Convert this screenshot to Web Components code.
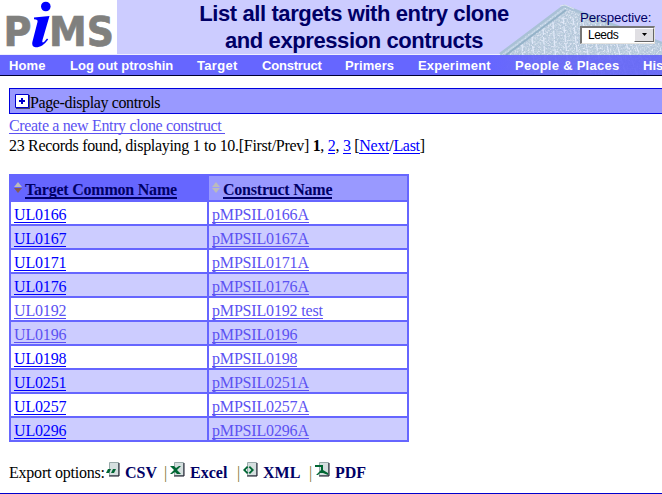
<!DOCTYPE html>
<html lang="en"><head><meta charset="utf-8"><title>PiMS</title>
<style>html,body{margin:0;height:494px;overflow:hidden;background:#fff}body{font:16px/20px "Liberation Serif",serif;color:#000}</style></head>
<body><pims-page></pims-page>
<script>
const define=(name,html)=>customElements.define(name,class extends HTMLElement{
  constructor(){super();this.attachShadow({mode:'open'}).innerHTML=typeof html==='function'?html(this):html;}
});
define('pims-logo',`<style>:host{display:block;width:117px;height:54px;background:#fff}svg{display:block;overflow:visible}text{font-family:"DejaVu Sans","Open Sans",sans-serif;font-weight:bold;fill:#80807e;stroke:#80807e;stroke-width:.7}</style>
<svg width="117" height="54"><text x="3.5" y="46" font-size="40" textLength="28" lengthAdjust="spacingAndGlyphs">P</text><text x="49" y="46" font-size="40" textLength="65" lengthAdjust="spacingAndGlyphs">MS</text>
<g fill="#00f"><circle cx="45.8" cy="6.500" r="4.800"/><path d="M34 17.500 49.500 16 42.500 40q-1 4 2 1.500l2.500-3 1.200 1C44 45 40 47.500 35.500 47.300q-4-.5-3.200-5L37.500 22q.8-2.700-3.500-2.800z"/></g></svg>`);
define('roof-picture',`<style>:host{display:block;width:180px;height:75px}svg{display:block}</style>
<svg width="180" height="75"><defs>
<filter id="n" x="0" y="0" width="100%" height="100%"><feTurbulence type="fractalNoise" baseFrequency=".6" numOctaves="2" seed="8"/><feColorMatrix values="0 0 0 0 .52  0 0 0 0 .65  0 0 0 0 .74  3 0 0 0 -1.35"/><feComposite in2="SourceGraphic" operator="in"/></filter>
<filter id="w" x="0" y="0" width="100%" height="100%"><feTurbulence type="fractalNoise" baseFrequency=".6" numOctaves="2" seed="21"/><feColorMatrix values="0 0 0 0 .8  0 0 0 0 .84  0 0 0 0 .94  0 3 0 0 -1.3"/><feComposite in2="SourceGraphic" operator="in"/></filter>
<clipPath id="c"><path d="M18 55 82 5 180 43V75H0z"/></clipPath></defs>
<g clip-path="url(#c)"><path fill="#b4c6da" d="M0 0h180v75H0z"/>
<path filter="url(#w)" d="M0 0h180v75H0z"/><path filter="url(#n)" d="M0 0h180v75H0z"/>
<g stroke="#e2eafa" stroke-width="1.200" stroke-dasharray="7 2"><path d="M61 28l3 47M71 22l4 53M81 17l6 58M91 18l7 57M101 22l8 53M111 26l9 49M121 28l11 47M131 31l13 44M141 34l14 41M151 38l15 37M50 37l3 38M40 44l2 31"/></g></g>
<path d="M18 54 82 6 180 43" fill="none" stroke="#a9c1d6" stroke-width="2.500"/><path d="M24 55 84 10" fill="none" stroke="#94b2c8" stroke-width="2"/><path d="M22 54 83 8" fill="none" stroke="#c3d6e8"/><path d="M78 6l5-1 9 4" fill="none" stroke="#dce6ee"/></svg>`);
define('perspective-select',`<style>:host{display:block;width:80px;font:13.300px/16px "Liberation Sans",sans-serif;letter-spacing:-.15px;color:#006}
.box{box-sizing:border-box;display:flex;width:75px;height:18px;background:#fff;border:1px solid #e4e2de;border-top:2px solid #777;border-left:2px solid #777;color:#000;font-size:12px;line-height:15px}
.v{flex:1;padding:0 0 0 6px;letter-spacing:-.5px}.b{box-sizing:border-box;width:20px;height:14px;background:#e0dfe3;border:1px solid #fff;border-right-color:#666;border-bottom-color:#666;display:grid;place-items:center}</style>
<div><slot></slot></div><div class="box"><span class="v">Leeds</span><span class="b"><svg width="7" height="4"><path d="M1 0h5L3.500 3z"/></svg></span></div>`);
define('pims-header',`<style>:host{display:flex;position:relative;height:54px;background:#ccf;border-bottom:1px solid #eef}
h1{box-sizing:border-box;margin:0;width:474px;text-align:center;font:bold 22px/27px "Liberation Sans",sans-serif;letter-spacing:-.4px;color:#006}
pims-logo,h1,perspective-select{position:relative;z-index:1;flex:none}roof-picture{position:absolute;left:482px;top:0}h1 span{display:block;white-space:nowrap}perspective-select{margin:10px 0 0 -11px}</style>
<pims-logo></pims-logo><roof-picture></roof-picture><h1><span>List all targets with entry clone</span><span>and expression contructs</span></h1><perspective-select>Perspective:</perspective-select>`);
define('pims-nav',`<style>:host{position:relative;z-index:2;display:grid;grid-template-columns:61px 127px 65px 83px 73px 97px 128px 80px;height:20px;padding-left:9px;border-bottom:1px solid #003;background:linear-gradient(90deg,#66f 490px,#6060f8e0 540px,#6060f8e0);font:bold 13px/21px "Liberation Sans",sans-serif;color:#fff;overflow:hidden}span{white-space:nowrap}</style>`+[['Home',.1],['Log out ptroshin',0],['Target',.3],['Construct',-.2],['Primers',.1],['Experiment',.2],['People &amp; Places',.27],['History',0]].map(([t,s])=>`<span style="letter-spacing:${s}px">${t}</span>`).join(''));
define('display-controls',`<style>:host{box-sizing:border-box;display:flex;align-items:center;height:26px;border:1px solid #00d;border-right:0;background:#99f;padding-left:5px;letter-spacing:-.38px}svg{flex:none}span{padding-top:3px}</style>
<svg width="15" height="15"><path fill="#446" d="M1 1h14v14H1z"/><path fill="#fff" stroke="#00c" d="M.5.5h13v13H.5z"/><path fill="#00c" d="M4 6h6v2H4zM6 4h2v6H6z"/></svg><span><slot></slot></span>`);
define('text-link',`<style>:host{color:#00f;border-bottom:1px solid currentColor;display:inline-block;height:15px;line-height:16px;white-space:pre}:host([visited]){color:#5c52f2}:host([head]){color:#006;font-weight:bold;border-bottom-width:2px;letter-spacing:-.22px}</style><slot></slot>`);
define('sort-icon',`<style>:host{display:block;width:8px;height:11px;margin-right:3px}svg{display:block}</style><svg width="8" height="11"><path fill="#bbb" d="M4 0l4 5H0z"/><path fill="var(--down,#bbb)" d="M0 6h8l-4 5z"/></svg>`);
define('target-table',()=>{
 const r=[['0166','0166A'],['0167','0167A'],['0171','0171A'],['0176','0176A'],['0192','0192 test',1],['0196','0196',1],['0198','0198'],['0251','0251A'],['0257','0257A'],['0296','0296A']];
 return `<style>:host{box-sizing:border-box;display:grid;grid-template-columns:196px 198px;gap:2px;width:400px;height:268px;padding:2px;background:#66f;grid-template-rows:24px repeat(10,22px);letter-spacing:-.17px}
.h,.c{display:flex;align-items:center;min-width:0}.h{padding:5px 0 0 3px;box-sizing:border-box}.h sort-icon{margin-top:-6px}.h2{background:#99f}.c{background:#fff;padding:4px 0 0 3px;box-sizing:border-box}.e{background:#ccf}</style>
<div class="h"><sort-icon style="--down:#875b54"></sort-icon><text-link head>Target Common Name</text-link></div><div class="h h2"><sort-icon></sort-icon><text-link head>Construct Name</text-link></div>`+
 r.map((x,i)=>{const k='c'+(i%2?' e':'');return `<div class="${k}"><text-link ${x[2]?'visited':''}>UL${x[0]}</text-link></div><div class="${k}"><text-link visited>pMPSIL${x[1]}</text-link></div>`}).join('');});
const glyphs={csv:'M1 9l2-4h3L4 9zM6 9l2-4h3L9 9z',excel:'M0 2h4l2 2 3-2h2L7 6l4 4H7L5 8l-3 2H0l4-4z',xml:'M4 2L0 6l4 4 1.300-1.300L2.600 6l2.700-2.700zM7 2l4 4-4 4-1.300-1.300L8.400 6 5.700 3.300z',pdf:'M0 1h8v5l5 3v2L8 9H5l-2 2H1l5-5V3H0z'};
define('export-option',e=>`<style>:host{display:flex;font-weight:bold;color:#006}svg{margin:-1px 5px 0 -1px}</style><svg width="15" height="16"><path fill="#d5dfdf" stroke="#9aa" d="M4.500.5h9v13h-9z"/><path fill="none" stroke="#112" d="M4 14h10V1"/><path transform="translate(0 2)" fill="#063" d="${glyphs[e.getAttribute('kind')]}"/></svg><span><slot></slot></span>`);
define('export-bar',`<style>:host{display:grid;grid-template-columns:97px 65px 73px 72px 70px;height:30px;padding-left:9px;border-bottom:1px solid #00c;white-space:nowrap}.lead{letter-spacing:-.22px}i{font-style:normal;color:#773;font-weight:normal}.o{display:flex;justify-content:space-between}.o i{margin-right:3px;width:4px}</style>
<span class="lead">Export options:</span><div class="o"><export-option kind="csv">CSV</export-option><i>|</i></div><div class="o"><export-option kind="excel">Excel</export-option><i>|</i></div><div class="o"><export-option kind="xml">XML</export-option><i>|</i></div><export-option kind="pdf">PDF</export-option>`);
define('pims-page',`<style>:host{display:block;width:662px;height:494px;overflow:hidden}main{padding:12px 0 0 9px}p{margin:0;height:20px;line-height:20px;white-space:nowrap;letter-spacing:-.3px}.create{padding-top:2px;letter-spacing:-.35px}target-table{margin-top:18px}export-bar{margin-top:21px}</style>
<pims-header></pims-header><pims-nav></pims-nav><main><display-controls>Page-display controls</display-controls><p class="create"><text-link visited>Create a new Entry clone construct </text-link></p><p>23 Records found, displaying 1 to 10.[First/Prev] <b>1</b>, <text-link>2</text-link>, <text-link>3</text-link> [<text-link>Next</text-link>/<text-link>Last</text-link>]</p><target-table></target-table></main><export-bar></export-bar>`);
</script></body></html>
